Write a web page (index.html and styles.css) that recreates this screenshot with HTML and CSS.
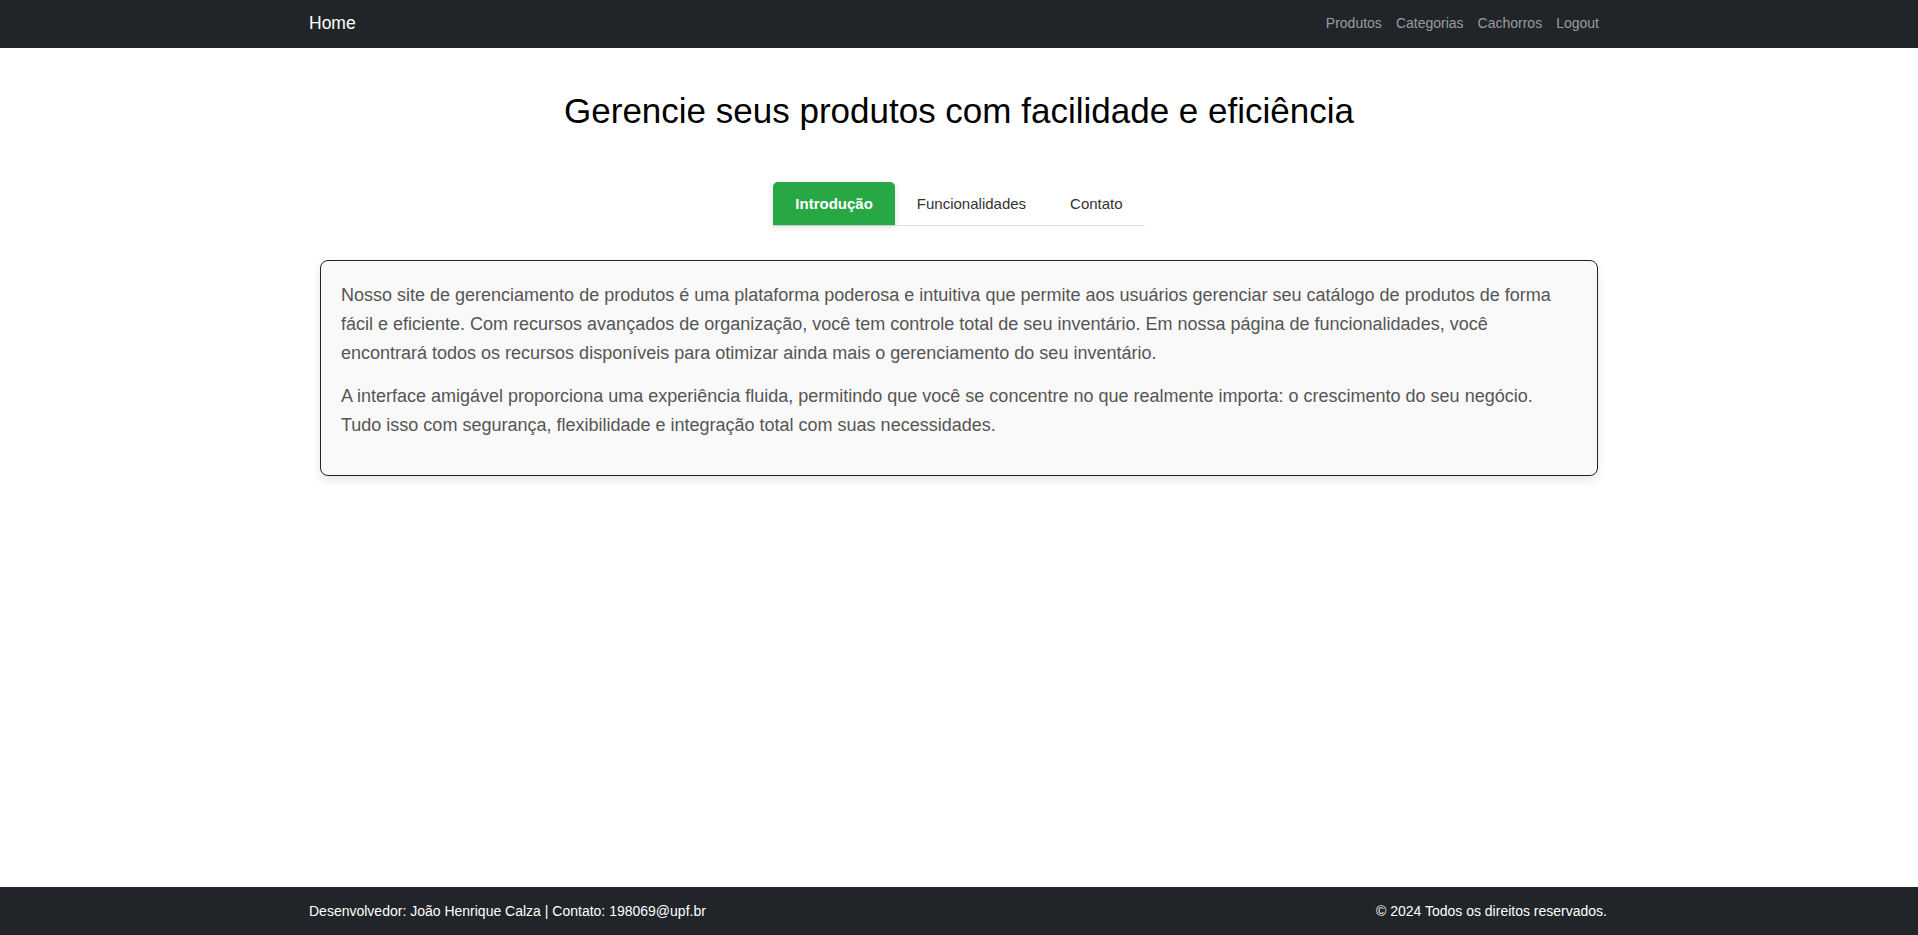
FILE: index.html
```html
<!DOCTYPE html>
<html lang="pt-BR">
<head>
<meta charset="utf-8">
<title>Home</title>
<link rel="stylesheet" href="styles.css">
</head>
<body>
<nav class="navbar">
  <div class="container nav-inner">
    <a class="brand" href="#">Home</a>
    <ul class="nav-links">
      <li><a href="#">Produtos</a></li>
      <li><a href="#">Categorias</a></li>
      <li><a href="#">Cachorros</a></li>
      <li><a href="#">Logout</a></li>
    </ul>
  </div>
</nav>
<main class="main">
  <h1 class="title">Gerencie seus produtos com facilidade e eficiência</h1>
  <div class="tabs-wrap">
    <ul class="tabs">
      <li><a class="tab active" href="#">Introdução</a></li>
      <li><a class="tab" href="#">Funcionalidades</a></li>
      <li><a class="tab" href="#">Contato</a></li>
    </ul>
  </div>
  <section class="card">
    <p>Nosso site de gerenciamento de produtos é uma plataforma poderosa e intuitiva que permite aos usuários gerenciar seu catálogo de produtos de forma fácil e eficiente. Com recursos avançados de organização, você tem controle total de seu inventário. Em nossa página de funcionalidades, você encontrará todos os recursos disponíveis para otimizar ainda mais o gerenciamento do seu inventário.</p>
    <p>A interface amigável proporciona uma experiência fluida, permitindo que você se concentre no que realmente importa: o crescimento do seu negócio. Tudo isso com segurança, flexibilidade e integração total com suas necessidades.</p>
  </section>
</main>
<footer class="footer">
  <div class="container footer-inner">
    <span>Desenvolvedor: João Henrique Calza | Contato: 198069@upf.br</span>
    <span>© 2024 Todos os direitos reservados.</span>
  </div>
</footer>
</body>
</html>
```
FILE: styles.css
```css
* { box-sizing: border-box; }
html, body { margin: 0; padding: 0; }
body {
  font-family: "Liberation Sans", Arial, sans-serif;
  min-height: 100vh;
  display: flex;
  flex-direction: column;
  background: #fff;
  color: #212529;
}
a { text-decoration: none; }
ul { list-style: none; margin: 0; padding: 0; }

.container {
  width: 100%;
  max-width: 1320px;
  margin: 0 auto;
  padding: 0 12px;
}

.navbar {
  background: #212529;
  height: 48px;
}
.nav-inner {
  height: 100%;
  display: flex;
  align-items: center;
  justify-content: space-between;
}
.brand {
  color: #fff;
  font-size: 17.5px;
  line-height: 24px;
  margin-left: -2px;
  margin-top: -3px;
}
.nav-links {
  display: flex;
  margin-top: -2px;
}
.nav-links a {
  display: block;
  padding: 0 7px;
  font-size: 14px;
  line-height: 20px;
  color: rgba(255, 255, 255, 0.55);
}
.nav-links li:last-child a { padding-right: 8px; }

.main {
  flex: 1;
  padding-top: 42px;
}
.title {
  margin: 0;
  text-align: center;
  font-weight: 400;
  font-size: 35px;
  line-height: 42px;
  color: #000;
}
.tabs-wrap {
  display: flex;
  justify-content: center;
  margin-top: 50px;
}
.tabs {
  display: flex;
  border-bottom: 1px solid #dee2e6;
}
.tab {
  display: block;
  padding: 12px 22px;
  font-size: 15px;
  line-height: 19px;
  color: #333;
  border-radius: 5px 5px 0 0;
}
.tab.active {
  background: #28a745;
  color: #fff;
  font-weight: 700;
  box-shadow: 0 2px 6px rgba(0, 0, 0, 0.15);
}

.card {
  max-width: 1278px;
  margin: 34px auto 0;
  background: #f9f9f9;
  border: 1px solid #222;
  border-radius: 8px;
  padding: 20px 20px 20px;
  box-shadow: 0 4px 8px rgba(0, 0, 0, 0.1);
}
.card p {
  margin: 0 0 15px;
  font-size: 18px;
  line-height: 28.8px;
  color: #555;
}

.footer {
  background: #212529;
  height: 48px;
}
.footer-inner {
  height: 100%;
  display: flex;
  align-items: center;
  justify-content: space-between;
  font-size: 14px;
  line-height: 20px;
  color: #fff;
}
.footer-inner span:first-child { margin-left: -2px; }
```
